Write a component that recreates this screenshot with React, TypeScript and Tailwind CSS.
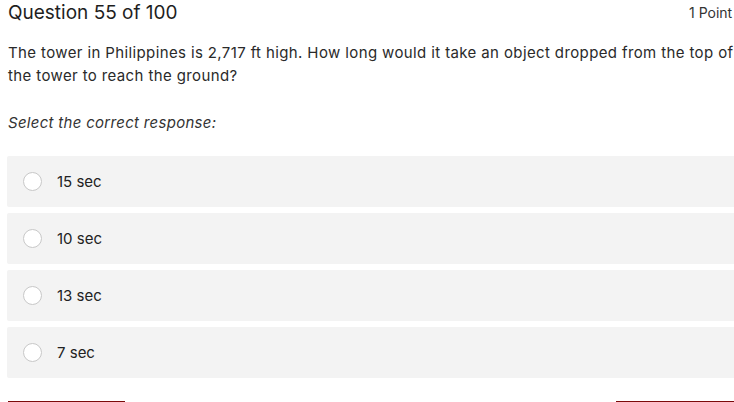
export default function App() {
  const options = ["15 sec", "10 sec", "13 sec", "7 sec"];
  return (
    <div
      className="w-[734px] h-[402px] overflow-hidden bg-white text-[#222]"
      style={{ fontFamily: "Inter, 'Liberation Sans', sans-serif" }}
    >
      <div className="w-[760px] pl-2">
        <div className="w-[726px] flex items-center justify-between h-[25px]">
          <h1 className="text-[19px] leading-none text-[#1e1e1e]">Question 55 of 100</h1>
          <span className="text-[14px] text-[#333] w-[45px] whitespace-nowrap">1 Point</span>
        </div>
        <p className="mt-[16px] text-[15px] tracking-[0.38px] leading-[23px] text-[#2a2a2a] w-[730px]">
          The tower in Philippines is 2,717 ft high. How long would it take an object dropped from the top of the tower to reach the ground?
        </p>
        <p className="mt-[25px] text-[15px] tracking-[0.3px] italic text-[#333]">Select the correct response:</p>
        <div className="mt-[21px] -ml-px flex flex-col gap-[6px]">
          {options.map((o) => (
            <div key={o} className="h-[51px] bg-[#f3f3f3] rounded-[2px] flex items-center pl-[16px]">
              <span className="w-[19px] h-[19px] rounded-full border border-[#c8c8c8] bg-white shrink-0" />
              <span className="ml-[15px] pt-[2px] text-[15px] text-[#222]">{o}</span>
            </div>
          ))}
        </div>
        <div className="mt-[23px] w-[740px] flex justify-between">
          <div className="w-[117px] border-t-2 border-[#7c0a0a] h-6" />
          <div className="w-[132px] border-t-2 border-[#7c0a0a] h-6" />
        </div>
      </div>
    </div>
  );
}
